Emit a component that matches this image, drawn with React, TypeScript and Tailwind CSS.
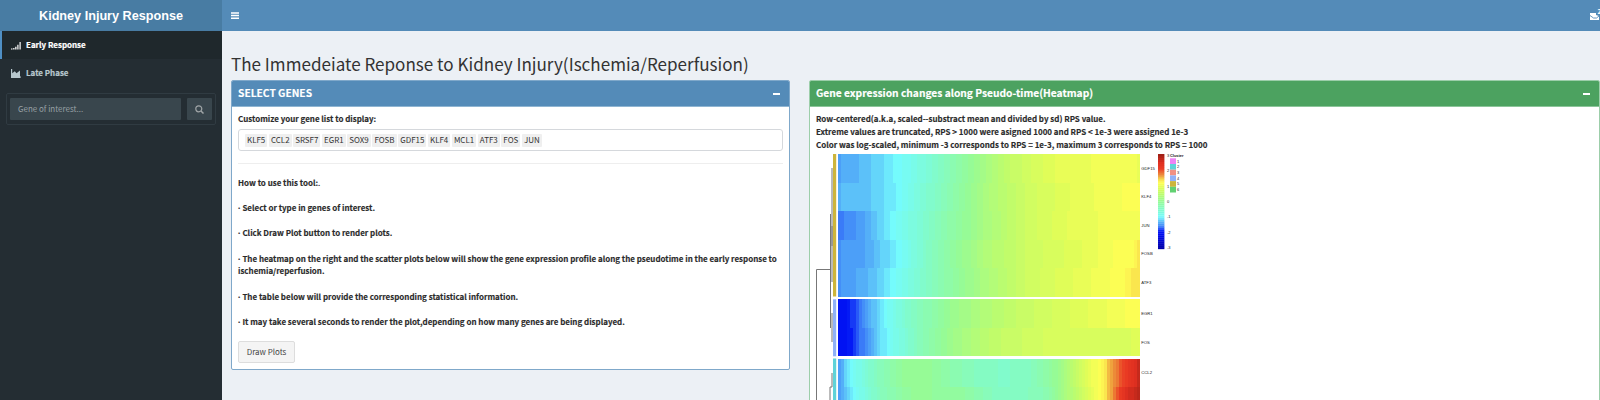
import type { ReactNode } from 'react';

type Knot = [number, number];
type RGB = [number, number, number];

const RAMP: [number, RGB][] = [
  [-3, [0, 0, 170]],
  [-2.1, [0, 12, 240]],
  [-1.9, [2, 22, 245]],
  [-1.6, [62, 130, 248]],
  [-1.3, [88, 184, 248]],
  [-1, [116, 251, 253]],
  [-0.5, [130, 251, 200]],
  [0, [150, 251, 150]],
  [0.5, [190, 252, 108]],
  [0.9, [224, 253, 88]],
  [1.2, [255, 254, 84]],
  [1.4, [248, 222, 76]],
  [1.7, [236, 140, 56]],
  [2.1, [234, 60, 36]],
  [2.5, [224, 48, 32]],
  [3, [160, 32, 22]],
];

function colorAt(v: number): string {
  for (let i = 1; i < RAMP.length; i++) {
    const [a, ca] = RAMP[i - 1];
    const [b, cb] = RAMP[i];
    if (v <= b) {
      const t = Math.max(0, (v - a) / (b - a));
      return `rgb(${ca.map((c, k) => Math.round(c + (cb[k] - c) * t)).join(',')})`;
    }
  }
  return 'rgb(160,32,22)';
}

function valueAt(knots: Knot[], x: number): number {
  for (let i = 1; i < knots.length; i++) {
    if (x <= knots[i][0]) {
      const [x0, v0] = knots[i - 1];
      const [x1, v1] = knots[i];
      return v0 + ((v1 - v0) * (x - x0)) / (x1 - x0);
    }
  }
  return knots[knots.length - 1][1];
}

const ROWS: { gene: string; y: number; h: number; knots: Knot[] }[] = [
  { gene: 'GDF15', y: 6, h: 28.6, knots: [[0, -1.4], [15, -1.36], [60, -1.0], [100, -0.5], [145, 0.2], [172, 0.58], [220, 0.98], [290, 1.1], [301, 1.0]] },
  { gene: 'KLF4', y: 34.6, h: 28.4, knots: [[0, -1.31], [28, -1.27], [60, -1.0], [105, -0.35], [145, 0.25], [190, 0.72], [240, 0.98], [301, 1.18]] },
  { gene: 'JUN', y: 63, h: 28.6, knots: [[0, -1.62], [20, -1.48], [54, -1], [100, -0.35], [145, 0.22], [190, 0.72], [240, 1], [301, 1.12]] },
  { gene: 'FOSB', y: 91.6, h: 28.4, knots: [[0, -1.5], [30, -1.38], [60, -1], [100, -0.3], [145, 0.32], [190, 0.7], [240, 0.92], [285, 1.18], [294, 1.2], [296, 1.3], [301, 1.32]] },
  { gene: 'ATF3', y: 120, h: 28.5, knots: [[0, -1.5], [30, -1.32], [54, -1], [100, -0.3], [145, 0.27], [190, 0.7], [240, 0.98], [287, 1.2], [290, 1.3], [301, 1.32]] },
  { gene: 'EGR1', y: 151.3, h: 28.4, knots: [[0, -2], [8, -1.97], [28, -1.5], [45, -1], [75, -0.45], [115, 0.08], [172, 0.56], [230, 0.84], [301, 1.2]] },
  { gene: 'FOS', y: 179.7, h: 28.4, knots: [[0, -2], [12, -1.9], [30, -1.5], [48, -1], [75, -0.48], [115, 0.15], [160, 0.58], [220, 0.82], [301, 0.86]] },
  { gene: 'CCL2', y: 210.5, h: 28.4, knots: [[0, -1.55], [12, -1], [40, -0.4], [65, -0.02], [85, 0.02], [130, -0.38], [165, -0.52], [195, -0.4], [220, 0.05], [245, 0.8], [262, 1.22], [273, 1.6], [285, 2.1], [294, 2.4], [301, 2.8]] },
  { gene: '', y: 238.9, h: 20, knots: [[0, -1.45], [16, -1], [45, -0.35], [75, -0.02], [120, -0.08], [165, -0.5], [205, -0.35], [230, 0.3], [250, 0.85], [265, 1.25], [276, 1.8], [287, 2.5], [301, 2.8]] },
];

const CLUSTERS = ['#ee82f5', '#5fd3d8', '#f09184', '#8fb1f8', '#cdb53b', '#61d172'];
const BINS = 100;

function Heatmap() {
  const w = 301.4 / BINS;
  return (
    <svg className="block h-[252px] w-[400px]" viewBox="0 0 400 252" fontFamily="'Liberation Sans', sans-serif">
      {ROWS.map((r) => (
        <g key={r.y}>
          <g shapeRendering="crispEdges">
            {Array.from({ length: BINS }, (_, i) => {
              const v = valueAt(r.knots, (i + 0.5) * w);
              const q = Math.round(v / 0.09) * 0.09;
              return <rect key={i} x={22.3 + i * w} y={r.y} width={w} height={r.h} fill={colorAt(q)} />;
            })}
          </g>
          <text x={325.3} y={r.y + 15.8} fontSize="4.2" fill="#222">{r.gene}</text>
        </g>
      ))}
      <rect x="17" y="6" width="3.2" height="142.5" fill="#cdb53b" />
      <rect x="17" y="151.3" width="3.2" height="57" fill="#8fb1f8" />
      <rect x="17" y="210.5" width="3.2" height="42" fill="#5fd3d8" />
      <g fill="none" stroke="#777" strokeWidth="1">
        <path d="M.5 252V121.5H14.5M14.5 66V180M16 20V98M16 78V134M16 165V194M16 225V239H14V252" />
      </g>
      {Array.from({ length: 48 }, (_, i) => (
        <rect key={i} x="342" y={6 + i * 1.98} width="6.4" height="2.1" fill={colorAt(3 - (i * 6) / 47)} />
      ))}
      {[3, 2, 1, 0, -1, -2, -3].map((n, i) => (
        <text key={n} x="351" y={9 + i * 15.35} fontSize="4" fill="#222">{n}</text>
      ))}
      <text x="354" y="9" fontSize="3.9" fontWeight="bold" fill="#111">Cluster</text>
      {CLUSTERS.map((c, i) => (
        <g key={c}>
          <rect x="354" y={10.3 + i * 5.7} width="6" height="5.7" fill={c} />
          <text x="361" y={14.6 + i * 5.7} fontSize="4" fill="#222">{i + 1}</text>
        </g>
      ))}
    </svg>
  );
}

function BoxHeader({ className, children }: { className: string; children: ReactNode }) {
  return (
    <div className={`flex h-[26px] items-center justify-between border-b pr-[9px] pl-[6px] text-[10.23px] font-bold text-white [-webkit-text-stroke:0.15px] ${className}`}>
      <span className="whitespace-nowrap">{children}</span>
      <span className="h-[2px] w-[7px] bg-white" />
    </div>
  );
}

function Bullet() {
  return <span className="inline-block w-[4.4px] font-['Noto_Sans',sans-serif]">·</span>;
}

const GENES = ['KLF5', 'CCL2', 'SRSF7', 'EGR1', 'SOX9', 'FOSB', 'GDF15', 'KLF4', 'MCL1', 'ATF3', 'FOS', 'JUN'];

export default function App() {
  return (
    <div className="flex h-[400px] w-[1600px] overflow-hidden bg-[#ecf0f5] font-['Noto_Sans_CJK_SC',sans-serif] text-[7.98px] leading-[12.67px] text-[#333]">
      <aside className="flex w-[222px] shrink-0 flex-col bg-[#242d33]">
        <div className="flex h-[31px] items-center justify-center bg-[#487ca3] pt-px font-['Liberation_Sans',sans-serif] text-[12.65px] font-bold text-white">
          Kidney Injury Response
        </div>
        <div className="flex h-[28px] items-center border-l-2 border-[#4f8fc4] bg-[#1f282c] pl-[9px] font-bold text-white [-webkit-text-stroke:0.2px]">
          <svg className="mr-[5px] h-[9px] w-[10px]" viewBox="0 0 10 9" fill="currentColor">
            <path d="M0 7.5h1.5V8.6H0zM2.2 7h1.3v1.6H2.2zM4.2 5.7h1.3v2.9H4.2zM6.3 3.8h1.2v4.8H6.3zM8.5 1h1.2v7.6H8.5z" />
          </svg>
          Early Response
        </div>
        <div className="flex h-[28px] items-center pl-[11px] font-bold text-[#b8c7ce] [-webkit-text-stroke:0.2px]">
          <svg className="mr-[5px] h-[9px] w-[10px]" viewBox="0 0 10 9" fill="currentColor">
            <path d="M0 0h1.2v9H0zM0 7.2h9.6V9H0zM1.2 7.9V4.3L3.8 2.2l1.7 2L9 1.6v6.3z" />
          </svg>
          Late Phase
        </div>
        <div className="mt-[6px] ml-[6px] flex h-[32px] w-[210px] items-center justify-between rounded-[2px] border border-[#303b42] px-[3px]">
          <div className="flex h-[22px] w-[171px] items-center rounded-[1px] bg-[#39464d] pl-[8px] text-[#98a0a4]">Gene of interest...</div>
          <div className="flex h-[22px] w-[25px] items-center justify-center rounded-[1px] bg-[#39464d]">
            <svg className="h-[9px] w-[9px]" viewBox="0 0 9 9" fill="none" stroke="#a0a5a7" strokeWidth="1.2">
              <circle cx="3.8" cy="3.8" r="3" />
              <path d="M6 6l2.5 2.5" strokeWidth="1.5" />
            </svg>
          </div>
        </div>
      </aside>
      <main className="flex min-w-0 flex-1 flex-col">
        <header className="flex h-[31px] shrink-0 items-center justify-between bg-[#548bb8] pl-[9px]">
          <svg className="h-[8px] w-[8px]" viewBox="0 0 8 8" fill="#fff">
            <path d="M0 .2h8v1.5H0zM0 2.8h8v1.5H0zM0 5.4h8v1.5H0z" />
          </svg>
          <svg className="h-[14px] w-[10px]" viewBox="0 0 10 14" fill="#fff">
            <path d="M0 4h6v2l3 1v4H0z" />
            <path d="M0 6.5l3.5 2.5h3L9 7" stroke="#548bb8" strokeWidth=".9" fill="none" />
            <text x="7.5" y="4.8" fontSize="6.5" fontWeight="bold">2</text>
          </svg>
        </header>
        <h2 className="mt-[20px] ml-[9px] h-[29px] shrink-0 text-[17.07px] leading-[26px] whitespace-nowrap">
          The Immedeiate Reponse to Kidney Injury(Ischemia/Reperfusion)
        </h2>
        <div className="flex items-start gap-[19px] pl-[9px]">
          <section className="h-[290px] w-[559px] shrink-0 overflow-hidden rounded-[2px] border border-[#7fa8ca] bg-white">
            <BoxHeader className="border-[#8fb5d2] bg-[#548bb8]">SELECT GENES</BoxHeader>
            <div className="px-[6px] pt-[6px]">
              <div className="font-bold text-[#2b2b2b] [-webkit-text-stroke:0.15px]">Customize your gene list to display:</div>
              <div className="mt-[3px] flex h-[22px] items-center gap-[1.6px] rounded-[3px] border border-[#d5d8dc] pt-[1px] pl-[6px]">
                {GENES.map((g) => (
                  <span key={g} className="h-[13px] rounded-[1px] bg-[#efefef] px-[2px]">{g}</span>
                ))}
              </div>
              <div className="mt-[12px] border-t border-[#eee]" />
              <div className="mt-[13px] flex flex-col gap-[12.67px] font-bold text-[#2b2b2b] [-webkit-text-stroke:0.15px]">
                <p>How to use this tool:<span className="font-normal">.</span></p>
                <p><Bullet />Select or type in genes of interest.</p>
                <p><Bullet />Click Draw Plot button to render plots.</p>
                <p>
                  <span className="whitespace-nowrap"><Bullet />The heatmap on the right and the scatter plots below will show the gene expression profile along the pseudotime in the early response to</span>
                  <br />
                  ischemia/reperfusion.
                </p>
                <p><Bullet />The table below will provide the corresponding statistical information.</p>
                <p><Bullet />It may take several seconds to render the plot,depending on how many genes are being displayed.</p>
              </div>
              <button className="mt-[12px] flex h-[22px] w-[57px] items-center justify-center rounded-[2px] border border-[#ddd] bg-[#f4f4f4] pt-[1px] text-[#444]">Draw Plots</button>
            </div>
          </section>
          <section className="h-[330px] w-[791px] shrink-0 overflow-hidden rounded-[2px] border border-[#9cceaa] bg-white">
            <BoxHeader className="border-[#8cc59a] bg-[#4ca260]">Gene expression changes along Pseudo-time(Heatmap)</BoxHeader>
            <div className="px-[6px] pt-[6.4px] font-bold text-[#2b2b2b] [-webkit-text-stroke:0.15px]">
              <p>Row-centered(a.k.a, scaled--substract mean and divided by sd) RPS value.</p>
              <p>Extreme values are truncated, RPS &gt; 1000 were asigned 1000 and RPS &lt; 1e-3 were assigned 1e-3</p>
              <p>Color was log-scaled, minimum -3 corresponds to RPS = 1e-3, maximum 3 corresponds to RPS = 1000</p>
            </div>
            <div className="-mt-[3.4px] pl-[6px] font-normal">
              <Heatmap />
            </div>
          </section>
        </div>
      </main>
    </div>
  );
}
